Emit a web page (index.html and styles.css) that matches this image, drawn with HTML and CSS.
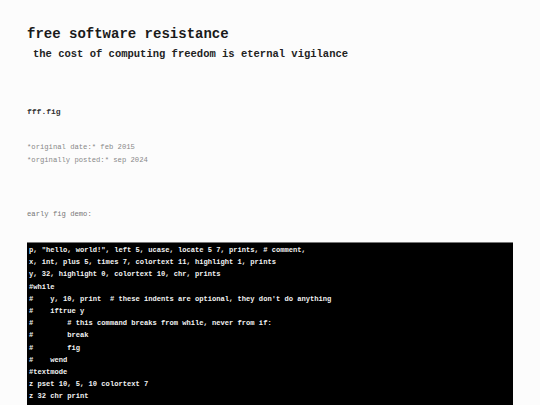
FILE: index.html
```html
<!DOCTYPE html>
<html>
<head>
<meta charset="utf-8">
<link rel="stylesheet" href="styles.css">
</head>
<body>
<div class="page">
  <h1 class="title">free software resistance</h1>
  <p class="subtitle">the cost of computing freedom is eternal vigilance</p>
  <h2 class="post-title">fff.fig</h2>
  <p class="meta">*original date:* feb 2015</p>
  <p class="meta">*orginally posted:* sep 2024</p>
  <p class="intro">early fig demo:</p>
  <pre class="code">p, "hello, world!", left 5, ucase, locate 5 7, prints, # comment,
x, int, plus 5, times 7, colortext 11, highlight 1, prints
y, 32, highlight 0, colortext 10, chr, prints
#while
#    y, 10, print  # these indents are optional, they don't do anything
#    iftrue y
#        # this command breaks from while, never from if:
#        break
#        fig
#    wend
#textmode
z pset 10, 5, 10 colortext 7
z 32 chr print</pre>
</div>
</body>
</html>
```
FILE: styles.css
```css
html, body {
  margin: 0;
  padding: 0;
  background: #fcfcfc;
}
body {
  font-family: "Liberation Mono", "Courier New", monospace;
  color: #222;
}
.page {
  padding: 26px 27px 0 27px;
}
.title {
  margin: 0;
  font-size: 14px;
  line-height: 16px;
  font-weight: bold;
  color: #1a1a1a;
}
.subtitle {
  margin: 6px 0 0 6px;
  font-size: 10.5px;
  line-height: 12px;
  font-weight: bold;
  color: #222;
}
.post-title {
  margin: 47px 0 0 0;
  font-size: 8px;
  line-height: 10px;
  font-weight: bold;
  color: #333;
}
.meta {
  margin: 0;
  font-size: 7.2px;
  line-height: 13px;
  color: #888;
}
.post-title + .meta {
  margin-top: 24px;
}
.intro {
  margin: 41px 0 0 0;
  font-size: 7.2px;
  line-height: 13px;
  color: #777;
}
.code {
  margin: 21px 0 0 0;
  width: 486px;
  box-sizing: border-box;
  padding: 1px 2px 2px 2px;
  background: #000;
  border-top: 1px solid #777;
  color: #f2f2f2;
  font-family: "Liberation Mono", "Courier New", monospace;
  font-size: 7.1px;
  font-weight: bold;
  line-height: 12.2px;
  white-space: pre;
  overflow: hidden;
}
```
